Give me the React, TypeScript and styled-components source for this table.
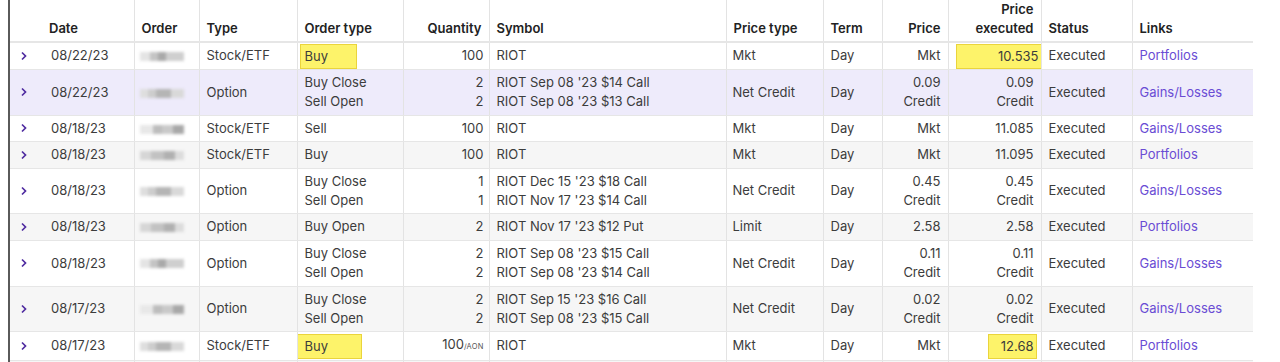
import React from 'react'
import styled, { createGlobalStyle } from 'styled-components'

const GlobalStyle = createGlobalStyle`
  html, body {
    margin: 0;
    padding: 0;
    background: #fff;
  }
  body {
    font-family: Inter, "Noto Sans", "Liberation Sans", sans-serif;
    font-size: 13px;
    color: #3c3c3c;
    overflow: hidden;
  }
`

type Mark = { w: number; off: number }

type Row = {
  date: string
  blur: number
  type: string
  orderType: string[]
  qty: string[]
  aon?: boolean
  symbol: string[]
  priceType: string
  price: string[]
  executed: string[]
  link: string
  hiOrder?: Mark
  hiExec?: Mark
  tone?: 'hover' | 'stripe' | 'plain'
}

const rows: Row[] = [
  { date: '08/22/23', blur: 0, type: 'Stock/ETF', orderType: ['Buy'], qty: ['100'], symbol: ['RIOT'], priceType: 'Mkt', price: ['Mkt'], executed: ['10.535'], link: 'Portfolios', hiOrder: { w: 57, off: 5 }, hiExec: { w: 89, off: 6 }, tone: 'plain' },
  { date: '08/22/23', blur: 1, type: 'Option', orderType: ['Buy Close', 'Sell Open'], qty: ['2', '2'], symbol: ["RIOT Sep 08 '23 $14 Call", "RIOT Sep 08 '23 $13 Call"], priceType: 'Net Credit', price: ['0.09', 'Credit'], executed: ['0.09', 'Credit'], link: 'Gains/Losses', tone: 'hover' },
  { date: '08/18/23', blur: 2, type: 'Stock/ETF', orderType: ['Sell'], qty: ['100'], symbol: ['RIOT'], priceType: 'Mkt', price: ['Mkt'], executed: ['11.085'], link: 'Gains/Losses', tone: 'plain' },
  { date: '08/18/23', blur: 3, type: 'Stock/ETF', orderType: ['Buy'], qty: ['100'], symbol: ['RIOT'], priceType: 'Mkt', price: ['Mkt'], executed: ['11.095'], link: 'Portfolios', tone: 'stripe' },
  { date: '08/18/23', blur: 1, type: 'Option', orderType: ['Buy Close', 'Sell Open'], qty: ['1', '1'], symbol: ["RIOT Dec 15 '23 $18 Call", "RIOT Nov 17 '23 $14 Call"], priceType: 'Net Credit', price: ['0.45', 'Credit'], executed: ['0.45', 'Credit'], link: 'Gains/Losses', tone: 'plain' },
  { date: '08/18/23', blur: 3, type: 'Option', orderType: ['Buy Open'], qty: ['2'], symbol: ["RIOT Nov 17 '23 $12 Put"], priceType: 'Limit', price: ['2.58'], executed: ['2.58'], link: 'Portfolios', tone: 'stripe' },
  { date: '08/18/23', blur: 0, type: 'Option', orderType: ['Buy Close', 'Sell Open'], qty: ['2', '2'], symbol: ["RIOT Sep 08 '23 $15 Call", "RIOT Sep 08 '23 $14 Call"], priceType: 'Net Credit', price: ['0.11', 'Credit'], executed: ['0.11', 'Credit'], link: 'Gains/Losses', tone: 'plain' },
  { date: '08/17/23', blur: 2, type: 'Option', orderType: ['Buy Close', 'Sell Open'], qty: ['2', '2'], symbol: ["RIOT Sep 15 '23 $16 Call", "RIOT Sep 08 '23 $15 Call"], priceType: 'Net Credit', price: ['0.02', 'Credit'], executed: ['0.02', 'Credit'], link: 'Gains/Losses', tone: 'stripe' },
  { date: '08/17/23', blur: 1, type: 'Stock/ETF', orderType: ['Buy'], qty: ['100'], aon: true, symbol: ['RIOT'], priceType: 'Mkt', price: ['Mkt'], executed: ['12.68'], link: 'Portfolios', hiOrder: { w: 67, off: 10 }, hiExec: { w: 49, off: 3 }, tone: 'plain' },
]

const colWidths = [32, 92, 65, 98, 106, 86, 237, 97, 59, 66, 93, 91, 121]

const blurPatterns = [
  'linear-gradient(90deg, #e4e4e4 0 22%, #c4c4c4 22% 40%, #a9a9a9 40% 58%, #cfcfcf 58% 100%)',
  'linear-gradient(90deg, #dedede 0 18%, #cdcdcd 18% 36%, #b5b5b5 36% 70%, #d9d9d9 70% 100%)',
  'linear-gradient(90deg, #e8e8e8 0 30%, #bdbdbd 30% 50%, #c9c9c9 50% 75%, #a8a8a8 75% 100%)',
  'linear-gradient(90deg, #d6d6d6 0 25%, #c2c2c2 25% 55%, #b0b0b0 55% 80%, #dcdcdc 80% 100%)',
]

const Page = styled.div`
  padding-left: 8px;
`

const Frame = styled.div`
  border-left: 2px solid #5a5a5a;
  width: 1245px;
`

const Table = styled.table`
  border-collapse: collapse;
  table-layout: fixed;
  width: 1243px;
`

const HeadCell = styled.th<{ $right?: boolean; $noLine?: boolean }>`
  height: 42px;
  box-sizing: border-box;
  padding: 0 7px 4px;
  vertical-align: bottom;
  text-align: ${(p) => (p.$right ? 'right' : 'left')};
  font-weight: 600;
  color: #222;
  line-height: 18.5px;
  border-left: ${(p) => (p.$noLine ? 'none' : '1px solid #e3e3e3')};
  border-bottom: 2px solid #e6e6e6;
  white-space: nowrap;
`

const BodyRow = styled.tr<{ $tone?: 'hover' | 'stripe' | 'plain' }>`
  background: ${(p) =>
    p.$tone === 'hover' ? '#eeebfb' : p.$tone === 'stripe' ? '#f6f6f6' : '#fff'};
`

const Cell = styled.td<{ $right?: boolean; $noLine?: boolean; $pl?: number; $pr?: number }>`
  padding: 3px ${(p) => (p.$pr ?? 7)}px 3px ${(p) => (p.$pl ?? 7)}px;
  line-height: 19.4px;
  vertical-align: middle;
  text-align: ${(p) => (p.$right ? 'right' : 'left')};
  border-left: ${(p) => (p.$noLine ? 'none' : '1px solid #e3e3e3')};
  border-bottom: 1px solid #e6e6e6;
  white-space: nowrap;
  overflow: hidden;
`

const Chevron = styled.svg`
  display: block;
  margin-left: 4px;
`

const Blurred = styled.span<{ $bg: string }>`
  display: inline-block;
  width: 44px;
  height: 9px;
  margin-left: -2px;
  vertical-align: middle;
  background: ${(p) => p.$bg};
  filter: blur(1.6px);
`

const Line = styled.div``

const Highlight = styled.span<{ $w: number; $off: number; $right?: boolean }>`
  display: inline-block;
  box-sizing: border-box;
  width: ${(p) => p.$w}px;
  height: 25px;
  line-height: 23px;
  margin: -3px 0;
  vertical-align: middle;
  background: #fdf36a;
  border: 1px solid #ead43c;
  text-align: ${(p) => (p.$right ? 'right' : 'left')};
  ${(p) =>
    p.$right
      ? `margin-right: -${p.$off}px; padding-right: ${p.$off - 1}px;`
      : `margin-left: -${p.$off}px; padding-left: ${p.$off - 1}px;`}
`

const Aon = styled.span`
  font-size: 7.5px;
  letter-spacing: 0.2px;
  color: #555;
`

const Link = styled.a`
  color: #6a4cd4;
  text-decoration: none;
`

const lines = (items: string[]) => items.map((t, i) => <Line key={i}>{t}</Line>)

export default function App() {
  return (
    <Page>
      <GlobalStyle />
      <Frame>
        <Table>
          <colgroup>
            {colWidths.map((w, i) => (
              <col key={i} style={{ width: w }} />
            ))}
          </colgroup>
          <thead>
            <tr>
              <HeadCell $noLine />
              <HeadCell $noLine>Date</HeadCell>
              <HeadCell>Order</HeadCell>
              <HeadCell>Type</HeadCell>
              <HeadCell>Order type</HeadCell>
              <HeadCell $right>Quantity</HeadCell>
              <HeadCell>Symbol</HeadCell>
              <HeadCell>Price type</HeadCell>
              <HeadCell>Term</HeadCell>
              <HeadCell $right>Price</HeadCell>
              <HeadCell $right>
                Price
                <br />
                executed
              </HeadCell>
              <HeadCell>Status</HeadCell>
              <HeadCell>Links</HeadCell>
            </tr>
          </thead>
          <tbody>
            {rows.map((r, i) => (
              <BodyRow key={i} $tone={r.tone}>
                <Cell $noLine $pl={6}>
                  <Chevron width="8" height="10" viewBox="0 0 8 10">
                    <path d="M2 1.5 L5.5 5 L2 8.5" fill="none" stroke="#4f2ba0" strokeWidth="1.7" />
                  </Chevron>
                </Cell>
                <Cell $noLine $pl={9}>{r.date}</Cell>
                <Cell>
                  <Blurred $bg={blurPatterns[r.blur]} />
                </Cell>
                <Cell>{r.type}</Cell>
                <Cell>
                  {r.hiOrder ? (
                    <Highlight $w={r.hiOrder.w} $off={r.hiOrder.off}>
                      {r.orderType[0]}
                    </Highlight>
                  ) : (
                    lines(r.orderType)
                  )}
                </Cell>
                <Cell $right $pl={4} $pr={5}>
                  {r.aon ? (
                    <>
                      {r.qty[0]}
                      <Aon>/AON</Aon>
                    </>
                  ) : (
                    lines(r.qty)
                  )}
                </Cell>
                <Cell>{lines(r.symbol)}</Cell>
                <Cell $pl={6}>{r.priceType}</Cell>
                <Cell>Day</Cell>
                <Cell $right>{lines(r.price)}</Cell>
                <Cell $right>
                  {r.hiExec ? (
                    <Highlight $w={r.hiExec.w} $off={r.hiExec.off} $right>
                      {r.executed[0]}
                    </Highlight>
                  ) : (
                    lines(r.executed)
                  )}
                </Cell>
                <Cell>Executed</Cell>
                <Cell>
                  <Link href="#">{r.link}</Link>
                </Cell>
              </BodyRow>
            ))}
            <BodyRow $tone="stripe">
              {colWidths.map((_, i) => (
                <Cell key={i} $noLine={i < 2}>
                  &nbsp;
                </Cell>
              ))}
            </BodyRow>
          </tbody>
        </Table>
      </Frame>
    </Page>
  )
}
